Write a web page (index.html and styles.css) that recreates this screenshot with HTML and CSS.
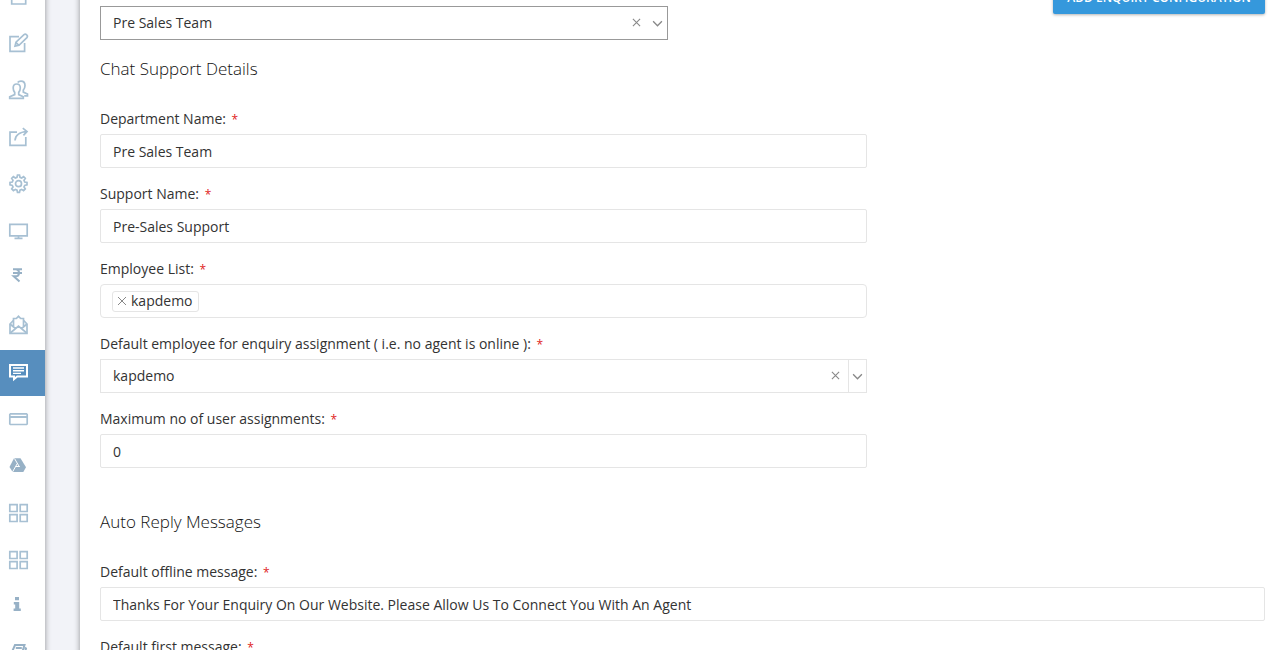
FILE: index.html
```
<!DOCTYPE html>
<html lang="en">
<head>
    <meta charset="UTF-8">
    <meta name="viewport" content="width=device-width, initial-scale=1.0">
    <title>Enquiry Configuration</title>
    <link rel="stylesheet" href="styles.css">
</head>
<body>
    <div class="layout">
        <nav class="sidebar">
            <a href="#" class="nav-item" aria-label="Documents">
                <svg viewBox="0 0 20 20"><path d="M2.7 2v16h14V2z"/></svg>
            </a>
            <a href="#" class="nav-item" aria-label="Edit">
                <svg viewBox="0 0 20 20"><path d="M10 3.700H1v14.600h14.600V10"/><path d="M6 13.200l1-4L15 1.700q1.300-1 2.700.2t.2 2.700L10 12.300zM7 9.500l2.700 2.600"/></svg>
            </a>
            <a href="#" class="nav-item" aria-label="Users">
                <svg viewBox="0 0 20 20"><path d="M.7 18.400h13.600v-1.600l-4.600-2.200v-2.200q1.600-2 1.600-4.400 0-4-3.600-4T4.200 8q0 2.600 1.500 4.400v2.200L.7 16.800z"/><path d="M8.700 2.600q1-1.400 3.300-1.400 4 0 4 4.400 0 2.700-1.700 4.500v2l4.200 2v1.700h-3.300"/></svg>
            </a>
            <a href="#" class="nav-item" aria-label="Share">
                <svg viewBox="0 0 20 20"><path d="M8 5.200H1v13.200h15.800V10"/><path d="M6 13.500q.5-8.200 12-9M13.800 1.200l4.200 3.300-3.600 3.800"/></svg>
            </a>
            <a href="#" class="nav-item" aria-label="Settings">
                <svg viewBox="0 0 20 20"><path d="M8 3.300L8.500 1h2l.5 2.300 1.600.7 2-1.300 1.700 1.700-1.300 2 .7 1.600 2.300.5v2.400l-2.300.5-.7 1.600 1.300 2-1.700 1.700-2-1.300-1.600.7-.5 2.300h-2L8 16.100l-1.600-.7-2 1.300L2.700 15 4 13l-.7-1.600L1 10.900V8.500L3.300 8 4 6.400l-1.300-2 1.700-1.700 2 1.300z"/><circle cx="9.500" cy="9.700" r="3"/></svg>
            </a>
            <a href="#" class="nav-item" aria-label="Monitor">
                <svg viewBox="0 0 20 20"><path d="M.8 3.300h17.400v11.500H.8zM9.500 15v2M5.500 17.300h8"/></svg>
            </a>
            <a href="#" class="nav-item" aria-label="Billing">
                <svg viewBox="0 0 20 20" class="bold"><path d="M4 1.200h9M4 5h9M4 1.200h2.500q3.500 0 3.500 3.500T6.500 8.300H4.700l5.800 5.200"/></svg>
            </a>
            <a href="#" class="nav-item" aria-label="Mail">
                <svg viewBox="0 0 20 20"><path d="M4.300 5.500L1 9v9.400h17V9l-3.300-3.500"/><path d="M4.500 12V3.500h2.800L9.500 1.300l2.200 2.200h2.800V12M1 9l6 5M18 9l-6 5M1.300 18l8.200-7 8.200 7"/></svg>
            </a>
            <a href="#" class="nav-item active" aria-label="Chat">
                <svg viewBox="0 0 20 20"><path class="thick" d="M1 3h17v11.500H8.200L5 17.200v-2.700H1z"/><path d="M4 6h11M4 8.700h11M4 11.400h8" class="thin"/></svg>
            </a>
            <a href="#" class="nav-item" aria-label="Cards">
                <svg viewBox="0 0 20 20"><path d="M1.500 4.800h16l.7.700v9.300l-.7.700h-16l-.7-.7V5.500z"/><path d="M1 8h17" class="thick"/></svg>
            </a>
            <a href="#" class="nav-item" aria-label="Drive">
                <svg viewBox="0 0 20 20" class="solid"><path d="M5 2.300h6.500l5.500 9L14.300 16H3.600L.5 11z"/><path class="gap" d="M5.500 2.500l5 8.500M8.300 7.500L3.500 16M7 10.500h3.500"/></svg>
            </a>
            <a href="#" class="nav-item" aria-label="Modules">
                <svg viewBox="0 0 20 20"><path d="M.8 1.700h7.300v6.800H.8zM11.200 1.700h7v6.800h-7zM.8 11.700h7.300v6.800H.8zM11.200 11.700h7v6.800h-7z"/></svg>
            </a>
            <a href="#" class="nav-item" aria-label="Apps">
                <svg viewBox="0 0 20 20"><path d="M.8 1.700h7.300v6.800H.8zM11.200 1.700h7v6.800h-7zM.8 11.700h7.300v6.800H.8zM11.200 11.700h7v6.800h-7z"/></svg>
            </a>
            <a href="#" class="nav-item" aria-label="Information">
                <svg viewBox="0 0 20 20" class="solid"><path d="M6 0h4v3.300H6zM4.800 5h5.400v6.500h1.600V14H4.600v-2.500h1.600V7.500H4.800z"/></svg>
            </a>
            <a href="#" class="nav-item" aria-label="Guide">
                <svg viewBox="0 0 20 20" class="bold"><path d="M6 1h9.500L12 12H3.500q-1.500-1-1-3zM6.800 4h6M6 7h6M16 3.500l1 1L14 15H4"/></svg>
            </a>
        </nav>

        <main class="content">
            <div class="toolbar">
                <div class="select-box department">
                    <select aria-label="Department">
                        <option>Pre Sales Team</option>
                    </select>
                    <button type="button" class="clear" aria-label="Clear department">
                        <svg viewBox="0 0 10 10"><path d="M1 1l8 8M9 1L1 9"/></svg>
                    </button>
                    <span class="arrow"><svg viewBox="0 0 10 10"><path d="M1 3l4 4 4-4"/></svg></span>
                </div>
                <button type="button" class="btn-add">Add Enquiry Configuration</button>
            </div>

            <form>
                <section class="details">
                    <h2>Chat Support Details</h2>

                    <div class="form-group">
                        <label for="departmentName">Department Name: <span class="required">*</span></label>
                        <input type="text" id="departmentName" class="form-control" value="Pre Sales Team">
                    </div>

                    <div class="form-group">
                        <label for="supportName">Support Name: <span class="required">*</span></label>
                        <input type="text" id="supportName" class="form-control" value="Pre-Sales Support">
                    </div>

                    <div class="form-group">
                        <label for="employeeList">Employee List: <span class="required">*</span></label>
                        <div class="tags-box">
                            <span class="tag">
                                <button type="button" class="tag-remove" aria-label="Remove kapdemo">
                                    <svg viewBox="0 0 10 10"><path d="M1 1l8 8M9 1L1 9"/></svg>
                                </button>
                                kapdemo
                            </span>
                            <input type="text" id="employeeList">
                        </div>
                    </div>

                    <div class="form-group">
                        <label for="defaultEmployee">Default employee for enquiry assignment ( i.e. no agent is online ): <span class="required">*</span></label>
                        <div class="select-box">
                            <select id="defaultEmployee">
                                <option>kapdemo</option>
                            </select>
                            <button type="button" class="clear" aria-label="Clear employee">
                                <svg viewBox="0 0 10 10"><path d="M1 1l8 8M9 1L1 9"/></svg>
                            </button>
                            <span class="arrow split"><svg viewBox="0 0 10 10"><path d="M1 3l4 4 4-4"/></svg></span>
                        </div>
                    </div>

                    <div class="form-group">
                        <label for="maxAssignments">Maximum no of user assignments: <span class="required">*</span></label>
                        <input type="text" id="maxAssignments" class="form-control" value="0">
                    </div>
                </section>

                <section class="messages">
                    <h2>Auto Reply Messages</h2>

                    <div class="form-group">
                        <label for="offlineMessage">Default offline message: <span class="required">*</span></label>
                        <input type="text" id="offlineMessage" class="form-control" value="Thanks For Your Enquiry On Our Website. Please Allow Us To Connect You With An Agent">
                    </div>

                    <div class="form-group">
                        <label for="firstMessage">Default first message: <span class="required">*</span></label>
                        <input type="text" id="firstMessage" class="form-control">
                    </div>
                </section>
            </form>
        </main>
    </div>
</body>
</html>
```
FILE: styles.css
```
* {
    box-sizing: border-box;
}
body {
    margin: 0;
    font-family: "Open Sans", sans-serif;
    font-size: 14px;
    line-height: 20px;
    color: #333;
    background-color: #f2f3f8;
}
input, select, button {
    font: inherit;
    color: inherit;
}
.layout {
    display: flex;
    gap: 35px;
    height: 100vh;
    overflow: hidden;
}

/* sidebar */
.sidebar {
    flex: none;
    width: 45px;
    height: calc(100% + 60px);
    margin-top: -26px;
    background-color: #fff;
    box-shadow: 0 0 6px rgba(0, 0, 0, 0.4);
}
.nav-item {
    display: block;
    height: 46px;
    margin-bottom: 1px;
    padding: 12px 9px;
    color: #a7c0d3;
}
.nav-item.active {
    background-color: #578ebe;
    color: #fff;
}
.nav-item svg {
    display: block;
    width: 20px;
    height: 20px;
    overflow: visible;
}
svg {
    fill: none;
    stroke: currentColor;
    stroke-width: 1.7;
}
svg .thick {
    stroke-width: 2;
}
svg .thin {
    stroke-width: 1.4;
}
svg.bold {
    color: #97b1c6;
    stroke-width: 2;
}
svg.solid {
    color: #97b1c6;
    fill: currentColor;
    stroke: none;
}
svg .gap {
    fill: none;
    stroke: #fff;
    stroke-width: 1;
}

/* content */
.content {
    flex: 1;
    min-width: 0;
    height: calc(100% + 60px);
    margin-top: -20px;
    padding: 0 15px 0 20px;
    background-color: #fff;
    box-shadow: 0 0 6px rgba(0, 0, 0, 0.4);
}
.toolbar {
    display: flex;
    justify-content: space-between;
    align-items: flex-start;
}
.department {
    width: calc(50% - 15px);
    margin-top: 26px;
}
.btn-add {
    height: 34px;
    padding: 2px 14px 0;
    border: none;
    border-radius: 2px;
    background-color: #3598dc;
    box-shadow: 0 1px 3px rgba(0, 0, 0, 0.3);
    color: #fff;
    font-size: 12px;
    font-weight: 600;
    text-transform: uppercase;
    cursor: pointer;
}
h2 {
    margin: 0 0 30px;
    color: #111;
    font-size: 17px;
    font-weight: 300;
    line-height: 20px;
}
.details {
    width: calc((100% + 30px) * 2 / 3 - 30px);
    margin-top: 19px;
}
.messages {
    margin-top: 44px;
}
.form-group {
    margin-bottom: 16px;
}
.form-group:last-child {
    margin-bottom: 0;
}
label {
    display: block;
    margin-bottom: 5px;
}
.required {
    margin-left: 2px;
    color: #e02222;
    font-size: 12px;
    line-height: 12px;
}
.form-control {
    display: block;
    width: 100%;
    height: 34px;
    padding: 6px 12px;
    border: 1px solid #e5e5e5;
    border-radius: 2px;
    background-color: #fff;
}
.select-box {
    display: flex;
    align-items: stretch;
    height: 34px;
    border: 1px solid #e5e5e5;
}
.select-box.department {
    border-color: #999;
}
.select-box select {
    flex: 1;
    min-width: 0;
    padding: 0 12px;
    border: none;
    background: none;
    appearance: none;
}
.clear, .arrow, .tag-remove {
    display: flex;
    align-items: center;
    justify-content: center;
    padding: 0;
    border: none;
    background: none;
    color: #888;
}
.clear {
    width: 24px;
    padding-bottom: 1px;
}
.arrow {
    width: 18px;
}
.arrow.split {
    border-left: 1px solid #e5e5e5;
}
.clear svg {
    width: 9px;
    height: 9px;
    stroke-width: 1.2;
}
.tag-remove svg {
    width: 10px;
    height: 10px;
    stroke-width: 1;
}
.arrow svg {
    width: 11px;
    height: 11px;
    stroke-width: 1.2;
}
.tags-box {
    display: flex;
    align-items: center;
    height: 34px;
    padding: 0 11px;
    border: 1px solid #e5e5e5;
    border-radius: 4px;
}
.tag {
    display: flex;
    align-items: center;
    gap: 4px;
    height: 21px;
    padding: 0 5px 0 4px;
    border: 1px solid #e5e5e5;
    border-radius: 3px;
}
.tags-box input {
    flex: 1;
    min-width: 0;
    border: none;
    outline: none;
}
```
